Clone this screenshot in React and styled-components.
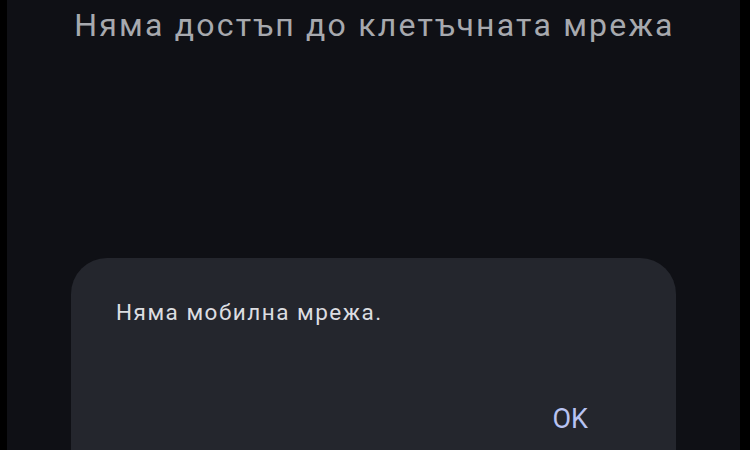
import styled, { createGlobalStyle } from 'styled-components'

const GlobalStyle = createGlobalStyle`
    html, body {
        margin: 0;
        padding: 0;
        background: #000;
        height: 100%;
        overflow: hidden;
    }
    #root {
        height: 100%;
    }
`

const Frame = styled.div`
    height: 450px;
    width: 750px;
    background: #000;
    display: flex;
    padding-left: 7px;
    padding-right: 10px;
    box-sizing: border-box;
`

const Screen = styled.div`
    flex: 1;
    background: #0f1015;
    display: flex;
    flex-direction: column;
    align-items: center;
    overflow: hidden;
    font-family: Roboto, "Noto Sans", sans-serif;
`

const Title = styled.h1`
    margin: 6px 0 0;
    padding-left: 2px;
    font-size: 32px;
    font-weight: 400;
    line-height: 1.2;
    color: #a7a9ae;
    letter-spacing: 2.2px;
`

const Dialog = styled.div`
    margin-top: 214px;
    width: 605px;
    height: 260px;
    flex-shrink: 0;
    background: #24262d;
    border-radius: 36px;
    box-sizing: border-box;
    padding: 41px 45px 0;
    display: flex;
    flex-direction: column;
`

const Message = styled.p`
    margin: 0;
    font-size: 22.5px;
    line-height: 1.2;
    color: #dcdde1;
    letter-spacing: 1.5px;
`

const Actions = styled.div`
    display: flex;
    justify-content: flex-end;
    margin-top: 77px;
    margin-right: 43px;
`

const TextButton = styled.button`
    background: none;
    border: none;
    padding: 0;
    font-family: inherit;
    font-size: 27px;
    line-height: 1.2;
    color: #b8c3f2;
    cursor: pointer;
`

export default function App() {
    return (
        <>
            <GlobalStyle />
            <Frame>
                <Screen>
                    <Title>Няма достъп до клетъчната мрежа</Title>
                    <Dialog>
                        <Message>Няма мобилна мрежа.</Message>
                        <Actions>
                            <TextButton>OK</TextButton>
                        </Actions>
                    </Dialog>
                </Screen>
            </Frame>
        </>
    )
}
